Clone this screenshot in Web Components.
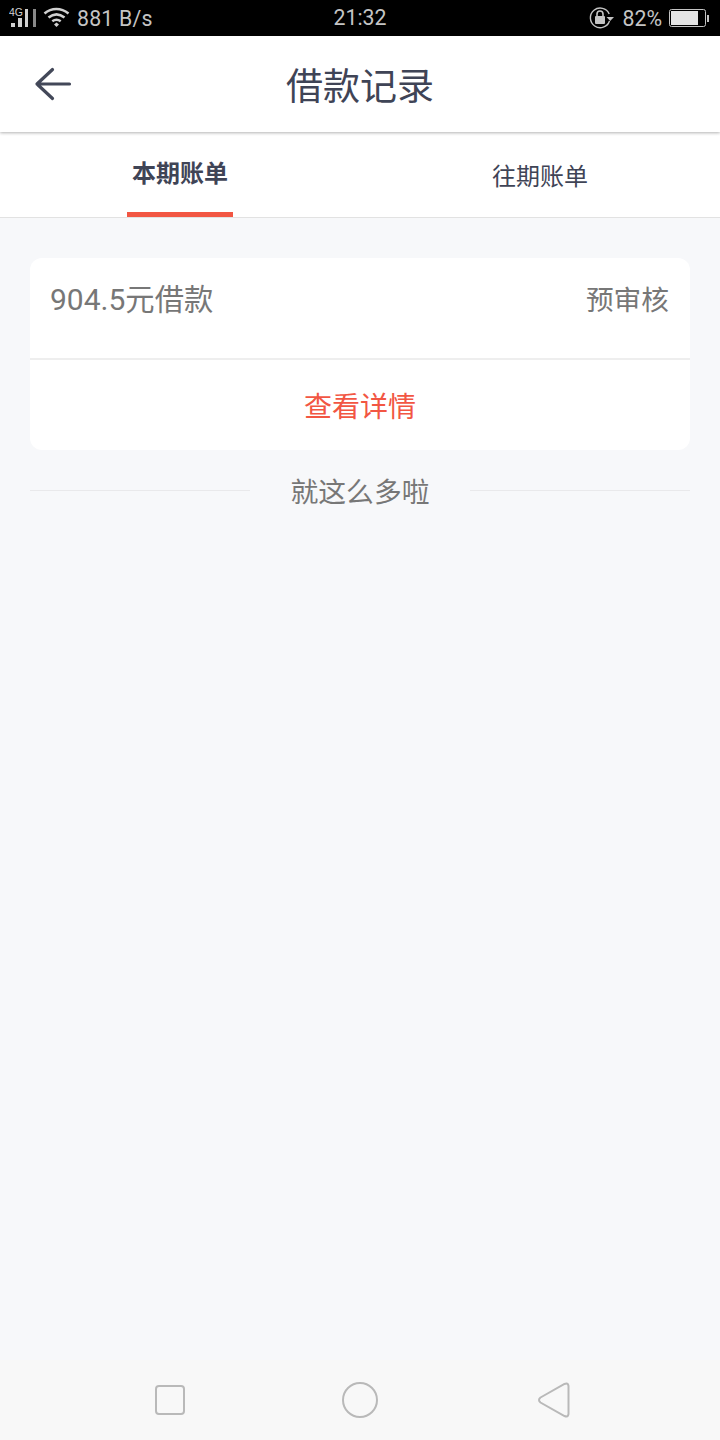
<!DOCTYPE html>
<html lang="zh">
<head>
<meta charset="utf-8">
<style>
  html, body { margin: 0; height: 100%; }
  body {
    width: 720px; height: 1440px; overflow: hidden;
    display: flex; flex-direction: column;
    background: #f7f8fa;
    font-family: Roboto, "Noto Sans CJK SC", sans-serif;
  }
</style>
</head>
<body>
<status-bar></status-bar>
<title-bar>借款记录</title-bar>
<bill-tabs></bill-tabs>
<loan-list>
  <loan-card amount="904.5" unit="元借款" state="预审核" action="查看详情"></loan-card>
  <list-end>就这么多啦</list-end>
</loan-list>
<nav-bar></nav-bar>

<script>
class StatusBar extends HTMLElement {
  constructor() {
    super();
    this.attachShadow({ mode: 'open' }).innerHTML = `
      <style>
        :host { display: flex; align-items: center; height: 36px; background: #000; color: #c4c4c4; font-size: 21.3px; position: relative; flex: none; }
        .left, .right { display: flex; align-items: center; height: 100%; }
        .left { padding-left: 9px; }
        .right { margin-left: auto; padding-right: 11px; }
        .speed { margin-left: 6px; letter-spacing: .2px; }
        .clock { position: absolute; left: 0; right: 0; text-align: center; line-height: 40px; }
        .pct { margin: 0 7px 0 7px; }
        svg { display: block; }
      </style>
      <div class="left">
        <svg width="28" height="28" viewBox="0 0 28 28">
          <text x="0" y="12" font-size="10.5" font-family="Liberation Sans" fill="#d0d0d0">4G</text>
          <g fill="#d0d0d0"><rect x="2" y="19" width="4" height="4"/><rect x="9" y="14" width="4" height="9"/><rect x="16" y="5" width="3" height="18"/></g>
          <rect x="24" y="5" width="3" height="18" fill="#888"/>
        </svg>
        <svg width="28" height="24" viewBox="0 0 28 24" style="margin-left:6px">
          <g fill="none" stroke="#d0d0d0" stroke-width="2.6" transform="translate(0 -2)">
            <path d="M1.500 9.500C8.500 3.500 18 3.500 25.500 9.500"/><path d="M5.500 13.500C10.500 9.500 16.500 9.500 21.500 13.500"/><path d="M9.300 17.300C12 15.300 15 15.300 17.700 17.300"/>
            <path d="M11 20.500L13.500 18.500L16 20.500L13.500 23Z" fill="#d0d0d0" stroke="none"/>
          </g>
        </svg>
        <span class="speed">881 B/s</span>
      </div>
      <span class="clock">21:32</span>
      <div class="right">
        <svg width="26" height="24" viewBox="0 0 26 24">
          <path d="M20.500 15A9.800 9.800 0 1 1 20.200 8" fill="none" stroke="#c4c4c4" stroke-width="1.4"/>
          <path d="M17.500 11H25L21.200 15Z" fill="#c4c4c4"/>
          <rect x="6" y="10" width="10" height="8" rx="1" fill="#c4c4c4"/>
          <path d="M8 10V8a3 3 0 0 1 6 0V10" fill="none" stroke="#c4c4c4" stroke-width="1.600"/>
        </svg>
        <span class="pct">82%</span>
        <svg width="40" height="18" viewBox="0 0 40 18">
          <rect x=".5" y=".5" width="36" height="17" rx="2" fill="none" stroke="#c4c4c4"/>
          <rect x="2" y="2" width="27" height="14" fill="#e4e4e4"/>
          <rect x="38" y="6" width="2" height="7" fill="#c4c4c4"/>
        </svg>
      </div>`;
  }
}

class TitleBar extends HTMLElement {
  constructor() {
    super();
    this.attachShadow({ mode: 'open' }).innerHTML = `
      <style>
        :host { display: flex; align-items: center; justify-content: center; height: 96px; background: #fff; color: #3f4456; font-size: 37px; position: relative; z-index: 1; flex: none; box-shadow: 0 1px 3px rgba(0,0,0,.3); }
        svg { position: absolute; left: 34px; top: 30px; }
      </style>
      <svg width="38" height="36" viewBox="0 0 38 36">
        <path d="M3 18H35.500M18.500 3.500L3 18L18.500 32.500" fill="none" stroke="#434859" stroke-width="3.200" stroke-linecap="round" stroke-linejoin="round"/>
      </svg>
      <slot></slot>`;
  }
}

class BillTabs extends HTMLElement {
  constructor() {
    super();
    this.attachShadow({ mode: 'open' }).innerHTML = `
      <style>
        :host { display: grid; grid-template-columns: 1fr 1fr; height: 85px; background: #fff; border-bottom: 1px solid #e2e2e2; color: #3f4456; font-size: 24px; flex: none; }
        div { display: flex; justify-content: center; padding-top: 28px; position: relative; box-sizing: border-box; height: 85px; line-height: 34px; }
        .on { font-weight: 700; padding-top: 25px; }
        .on::after { content: ''; position: absolute; left: 127px; width: 106px; bottom: 0; height: 5px; background: #f25643; }
      </style>
      <div class="on">本期账单</div>
      <div>往期账单</div>`;
  }
}

class LoanList extends HTMLElement {
  constructor() {
    super();
    this.attachShadow({ mode: 'open' }).innerHTML = `
      <style>
        :host { display: block; flex: 1; padding: 40px 30px 0; }
      </style>
      <slot></slot>`;
  }
}

class LoanCard extends HTMLElement {
  constructor() {
    super();
    this.attachShadow({ mode: 'open' }).innerHTML = `
      <style>
        :host { display: block; background: #fff; border-radius: 12px; font-size: 28px; }
        .top { display: flex; justify-content: space-between; height: 102px; padding: 22px 21px 0 20px; box-sizing: border-box; color: #777; line-height: 40px; border-bottom: 2px solid #eeeeee; }
        .amount { font-size: 30px; }
        .amount span { font-size: 29.3px; }
        .state { font-size: 27.7px; padding-top: 1px; }
        .action { height: 90px; display: flex; align-items: center; justify-content: center; color: #f25643; }
      </style>
      <div class="top"><div class="amount">${this.getAttribute('amount')}<span>${this.getAttribute('unit')}</span></div><div class="state">${this.getAttribute('state')}</div></div>
      <div class="action">${this.getAttribute('action')}</div>`;
  }
}

class ListEnd extends HTMLElement {
  constructor() {
    super();
    this.attachShadow({ mode: 'open' }).innerHTML = `
      <style>
        :host { display: flex; align-items: center; justify-content: space-between; height: 79px; color: #777; font-size: 27.8px; }
        i { width: 220px; height: 1px; margin-top: 1px; background: #e9e9eb; }
      </style>
      <i></i><slot></slot><i></i>`;
  }
}

class NavBar extends HTMLElement {
  constructor() {
    super();
    this.attachShadow({ mode: 'open' }).innerHTML = `
      <style>
        :host { display: flex; align-items: center; height: 80px; padding-left: 155px; background: #f8f8f8; flex: none; }
        svg { display: block; fill: none; stroke: #b9b9b9; stroke-width: 2; }
        .home { margin: 0 160px 0 157px; }
      </style>
      <svg width="30" height="30" viewBox="0 0 30 30"><rect x="1" y="1" width="28" height="28" rx="3"/></svg>
      <svg class="home" width="36" height="36" viewBox="0 0 36 36"><circle cx="18" cy="18" r="17"/></svg>
      <svg width="32" height="36" viewBox="0 0 32 36"><path d="M2.500 15.500L26.500 2Q30 .5 30.500 4V32Q30 35.500 26.500 34L2.500 20.500Q-.5 18 2.500 15.500Z"/></svg>`;
  }
}

customElements.define('status-bar', StatusBar);
customElements.define('title-bar', TitleBar);
customElements.define('bill-tabs', BillTabs);
customElements.define('loan-list', LoanList);
customElements.define('loan-card', LoanCard);
customElements.define('list-end', ListEnd);
customElements.define('nav-bar', NavBar);
</script>
</body>
</html>
